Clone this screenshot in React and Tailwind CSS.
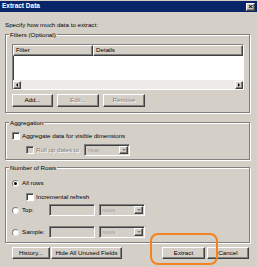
import React from 'react';

const raised =
  'border border-t-white border-l-white border-b-[#404040] border-r-[#404040] shadow-[inset_-1px_-1px_0_#808080] bg-[#d4d0c8]';
const sunken =
  'border border-t-[#808080] border-l-[#808080] border-b-white border-r-white shadow-[inset_1px_1px_0_#404040]';

function Btn({ children, disabled, className = '' }) {
  return (
    <div
      className={`${raised} flex items-center justify-center leading-none whitespace-nowrap ${
        disabled ? 'text-[#808080] [text-shadow:1px_1px_0_#fff]' : 'text-black'
      } ${className}`}
    >
      {children}
    </div>
  );
}

function Check({ disabled }) {
  return <div className={`${sunken} w-[8px] h-[8px] shrink-0 ${disabled ? 'bg-[#d4d0c8]' : 'bg-white'}`} />;
}

function Radio({ checked }) {
  return (
    <div className="w-[7px] h-[7px] shrink-0 rounded-full bg-white border border-t-[#808080] border-l-[#808080] border-b-[#e8e8e8] border-r-[#e8e8e8] flex items-center justify-center">
      {checked && <div className="w-[3px] h-[3px] rounded-full bg-black" />}
    </div>
  );
}

function Field({ className = '' }) {
  return <div className={`${sunken} h-[12px] bg-[#d4d0c8] ${className}`} />;
}

function Select({ value, className = '' }) {
  return (
    <div className={`${sunken} h-[12px] bg-[#d4d0c8] flex items-center justify-between pl-[2px] pr-[1px] ${className}`}>
      <span className="text-[#a0a0a0] leading-none">{value}</span>
      <div className={`${raised} w-[9px] h-[8px] flex items-center justify-center`}>
        <div className="w-0 h-0 border-l-[2px] border-r-[2px] border-t-[2px] border-l-transparent border-r-transparent border-t-[#808080]" />
      </div>
    </div>
  );
}

function Group({ title, className = '', children }) {
  return (
    <div className={`relative border border-[#808080] shadow-[inset_1px_1px_0_#fff,1px_1px_0_#fff] ${className}`}>
      <span className="absolute left-[3px] top-[-5px] px-[1px] bg-[#d4d0c8] leading-[9px]">{title}</span>
      {children}
    </div>
  );
}

export default function App() {
  return (
    <div className="relative w-[257px] h-[267px] overflow-hidden bg-[#d4d0c8] pt-[1px] font-['Liberation_Sans',Arial,sans-serif] text-[6.2px] text-black">
      <div className="h-[11px] bg-[#0a246a] flex items-center justify-between pl-[2px] pr-[2px]">
        <span className="text-white font-bold leading-none text-[6.5px]">Extract Data</span>
        <div className={`${raised} w-[9px] h-[8px] flex items-center justify-center text-[8px] leading-none font-bold`}>
          ×
        </div>
      </div>

      <div className="px-[5px]">
        <div className="mt-[8px] leading-[9px]">Specify how much data to extract:</div>

        <Group title="Filters (Optional)" className="mt-[5px] w-[245px] pt-[9px] pl-[6px] pr-[5px] pb-[5px]">
          <div className={`${sunken} h-[46px] bg-white flex flex-col`}>
            <div className="flex h-[11px] bg-[#d4d0c8] shrink-0">
              <div className={`${raised} w-[80px] pl-[2px] flex items-center leading-none`}>Filter</div>
              <div className={`${raised} flex-1 pl-[2px] flex items-center leading-none`}>Details</div>
            </div>
            <div className="flex-1" />
            <div className="h-[9px] bg-[#ecebe8] flex justify-between items-center">
              <div className={`${raised} w-[8px] h-[8px] flex items-center justify-center`}>
                <div className="w-0 h-0 border-t-[2px] border-b-[2px] border-r-[2px] border-t-transparent border-b-transparent border-r-black" />
              </div>
              <div className={`${raised} w-[8px] h-[8px] flex items-center justify-center`}>
                <div className="w-0 h-0 border-t-[2px] border-b-[2px] border-l-[2px] border-t-transparent border-b-transparent border-l-black" />
              </div>
            </div>
          </div>
          <div className="flex gap-[4px] mt-[4px]">
            <Btn className="w-[41px] h-[13px]">Add...</Btn>
            <Btn className="w-[42px] h-[13px]" disabled>Edit...</Btn>
            <Btn className="w-[42px] h-[13px]" disabled>Remove</Btn>
          </div>
        </Group>

        <Group title="Aggregation" className="mt-[9px] w-[245px] pt-[8px] pl-[6px] pb-[4px]">
          <div className="flex items-center gap-[2px] h-[10px]">
            <Check />
            <span className="leading-none">Aggregate data for visible dimensions</span>
          </div>
          <div className="flex items-center h-[10px] mt-[4px] pl-[14px]">
            <Check disabled />
            <span className="leading-none ml-[2px] w-[48px] text-[#808080] [text-shadow:1px_1px_0_#fff]">Roll up dates to</span>
            <Select value="Year" className="w-[46px]" />
          </div>
        </Group>

        <Group title="Number of Rows" className="mt-[7px] w-[245px] pt-[10px] pl-[6px] pb-[4px]">
          <div className="flex items-center gap-[3px] h-[10px]">
            <Radio checked />
            <span className="leading-none">All rows</span>
          </div>
          <div className="flex items-center gap-[2px] h-[10px] mt-[4px] pl-[14px]">
            <Check />
            <span className="leading-none">Incremental refresh</span>
          </div>
          <div className="flex items-center h-[12px] mt-[2px]">
            <Radio />
            <span className="leading-none ml-[3px] w-[27px]">Top:</span>
            <Field className="w-[46px]" />
            <Select value="rows" className="ml-[4px] w-[46px]" />
          </div>
          <div className="flex items-center h-[12px] mt-[10px]">
            <Radio />
            <span className="leading-none ml-[3px] w-[27px]">Sample:</span>
            <Field className="w-[46px]" />
            <Select value="rows" className="ml-[4px] w-[46px]" />
          </div>
        </Group>

        <div className="flex mt-[4px] pl-[7px]">
          <Btn className="w-[38px] h-[12px]">History...</Btn>
          <Btn className="w-[71px] h-[12px] ml-[1px]">Hide All Unused Fields</Btn>
          <Btn className="w-[43px] h-[12px] ml-[40px]">Extract</Btn>
          <Btn className="w-[42px] h-[12px] ml-[2px]">Cancel</Btn>
        </div>
      </div>

      <div className="absolute left-[150px] top-[233px] w-[68px] h-[32px] rounded-[8px] border-2 border-[#f5821f]" />
    </div>
  );
}
